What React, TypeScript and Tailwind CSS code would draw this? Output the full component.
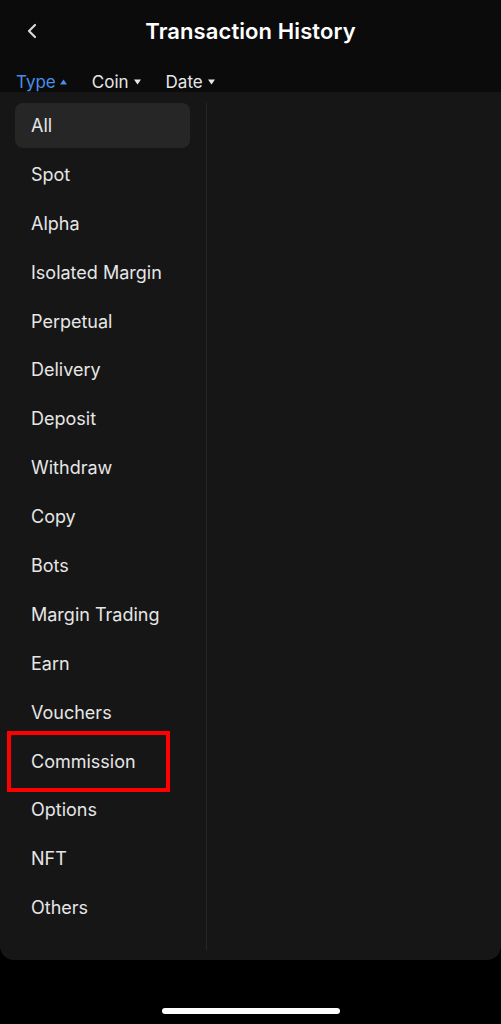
import { ChevronLeft } from "lucide-react";

const types = [
  "All",
  "Spot",
  "Alpha",
  "Isolated Margin",
  "Perpetual",
  "Delivery",
  "Deposit",
  "Withdraw",
  "Copy",
  "Bots",
  "Margin Trading",
  "Earn",
  "Vouchers",
  "Commission",
  "Options",
  "NFT",
  "Others",
];

function Caret({ up, className }: { up?: boolean; className?: string }) {
  return (
    <svg width="7" height="6" viewBox="0 0 7 6" className={className}>
      {up ? (
        <path d="M3.5 0.5 L7 5.5 L0 5.5 Z" fill="currentColor" />
      ) : (
        <path d="M0 0.5 L7 0.5 L3.5 5.5 Z" fill="currentColor" />
      )}
    </svg>
  );
}

export default function App() {
  const selected = 0;
  return (
    <div
      className="w-[501px] h-[1024px] bg-black flex flex-col overflow-hidden"
      style={{ fontFamily: "Inter, 'Noto Sans', sans-serif" }}
    >
      <div className="bg-[#0b0b0b] h-[92px] flex flex-col">
        <div className="relative h-[60px] pt-[6px] flex items-center justify-center">
          <ChevronLeft
            className="absolute left-[20px] top-[19px] text-[#d8d8d8]"
            size={24}
            strokeWidth={2.2}
          />
          <span className="text-white text-[22px] font-semibold tracking-[0.1px]">
            Transaction History
          </span>
        </div>
        <div className="flex items-center gap-[25px] pl-[16px] pt-[16px] text-[17px] leading-[20px]">
          <div className="flex items-center gap-[4px] text-[#4a8ee8]">
            <span>Type</span>
            <Caret up />
          </div>
          <div className="flex items-center gap-[5px] text-[#e8e8e8]">
            <span>Coin</span>
            <Caret />
          </div>
          <div className="flex items-center gap-[5px] text-[#e8e8e8]">
            <span>Date</span>
            <Caret />
          </div>
        </div>
      </div>

      <div className="bg-[#161616] h-[868px] rounded-b-[14px] flex">
        <div className="w-[207px] border-r border-[#262626] mt-[11px] mb-[10px] flex flex-col gap-[3.9px] pl-[15px] pr-[16px]">
          {types.map((t, i) => (
            <div
              key={t}
              className={
                "relative h-[45px] flex items-center pl-[16px] rounded-[8px] text-[18px] text-[#e6e6e6] " +
                (i === selected ? "bg-[#262626]" : "")
              }
            >
              {t}
              {t === "Commission" && (
                <div className="absolute left-[-8px] top-[-8px] w-[163px] h-[61px] border-[4px] border-[#ff0000]" />
              )}
            </div>
          ))}
        </div>
        <div className="flex-1" />
      </div>

      <div className="flex-1 flex items-end justify-center pb-[10px]">
        <div className="w-[178px] h-[6px] rounded-full bg-white" />
      </div>
    </div>
  );
}
